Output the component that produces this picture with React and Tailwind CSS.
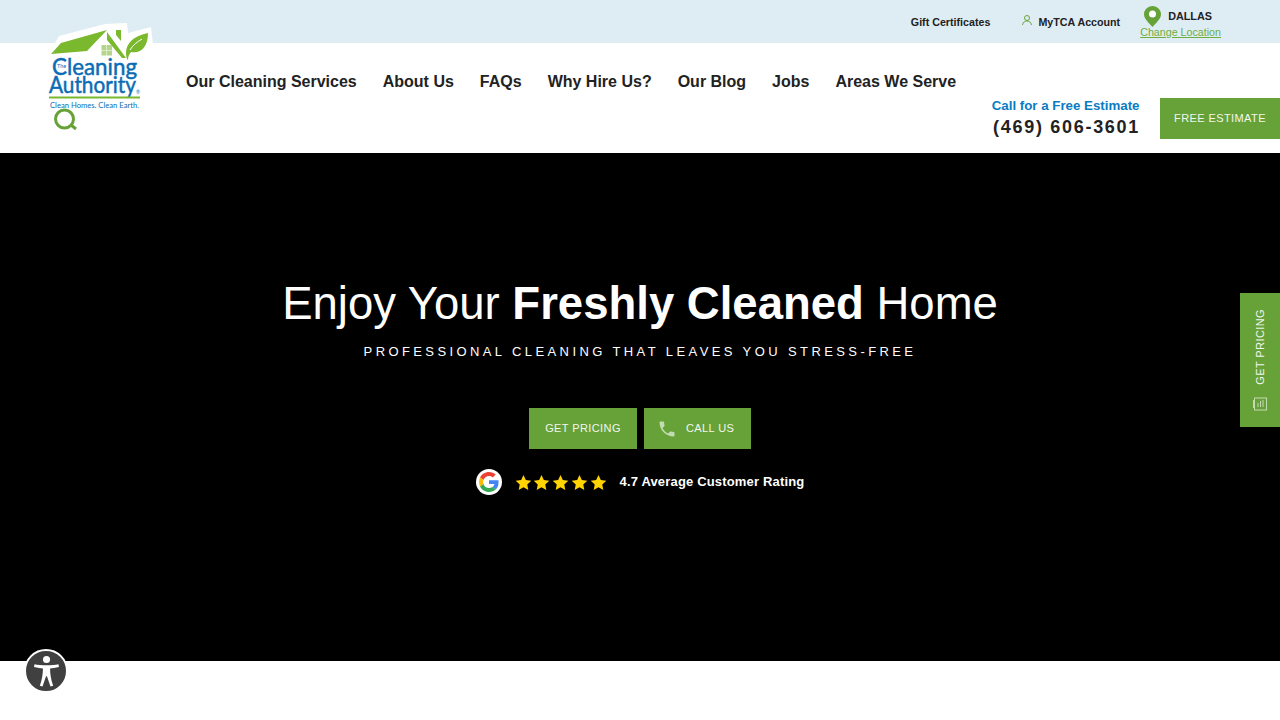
import React from 'react';

const sans = "font-['Liberation_Sans',Arial,sans-serif]";

const navLinks = ['Our Cleaning Services', 'About Us', 'FAQs', 'Why Hire Us?', 'Our Blog', 'Jobs', 'Areas We Serve'];

// Logo artwork, coordinates are page pixels offset from the svg corner
function Logo() {
  return (
    <svg width="125" height="120" viewBox="40 18 125 120" className="block">
      <path d="M59 36 L105 24 L127 23 L128 33 L151 27 L153 45 L143 62 L140 112 L46 112 L46 56 L49 53 Z" fill="#fff" />
      <path d="M61 43 L107 30 L87 51 L51 54 Z" fill="#7ab82e" />
      <path d="M107 32 L126 58 L122 58 L107 40 Z" fill="#7ab82e" />
      <path d="M116 30 L121 30 L121 41 L116 35 Z" fill="#7ab82e" />
      <path d="M127 59 C123 46 132 36 148 33 C148 47 141 54 131 52 C129 54 128 57 128 60 Z" fill="#7ab82e" />
      <path d="M130 50 C133 45 137 42 142 39" stroke="#fff" strokeWidth="1" fill="none" />
      <rect x="101.500" y="45" width="5" height="5" fill="#b5d58c" />
      <rect x="107" y="45" width="5" height="5" fill="#b5d58c" />
      <rect x="101.500" y="50.500" width="5" height="5" fill="#b5d58c" />
      <rect x="107" y="50.500" width="5" height="5" fill="#b5d58c" />
      <text x="52" y="75" fill="#0b6cb5" stroke="#0b6cb5" strokeWidth="0.5" fontFamily="Lato, sans-serif" fontSize="23" textLength="85" lengthAdjust="spacingAndGlyphs">Cleaning</text>
      <text x="57" y="68" fill="#0b6cb5" fontFamily="Lato, sans-serif" fontSize="5.500">The</text>
      <text x="49" y="92.500" fill="#0b6cb5" stroke="#0b6cb5" strokeWidth="0.5" fontFamily="Lato, sans-serif" fontSize="23" textLength="87" lengthAdjust="spacingAndGlyphs">Authority</text>
      <text x="136" y="94" fill="#0b6cb5" fontFamily="Lato, sans-serif" fontSize="5">®</text>
      <rect x="49" y="96.500" width="91" height="2" fill="#7ab82e" />
      <text x="50" y="108" fill="#0b6cb5" fontFamily="Lato, sans-serif" fontSize="7.500" textLength="89" lengthAdjust="spacingAndGlyphs">Clean Homes. Clean Earth.</text>
      <circle cx="64.500" cy="119" r="9" fill="none" stroke="#67a239" strokeWidth="3" />
      <path d="M71 125 L76 129" stroke="#67a239" strokeWidth="3" />
    </svg>
  );
}

function PhoneIcon() {
  return (
    <svg width="20" height="20" viewBox="0 0 24 24" fill="#c3dbb0">
      <path d="M6.620 10.790c1.440 2.830 3.760 5.140 6.590 6.590l2.200-2.200c.27-.27.67-.36 1.020-.24 1.120.37 2.330.57 3.570.57.55 0 1 .45 1 1V20c0 .55-.45 1-1 1-9.390 0-17-7.610-17-17 0-.55.45-1 1-1h3.500c.55 0 1 .45 1 1 0 1.250.2 2.450.57 3.570.11.35.03.74-.25 1.020l-2.200 2.200z" />
    </svg>
  );
}

function GoogleBadge() {
  return (
    <div className="w-[26px] h-[26px] rounded-full bg-white flex items-center justify-center">
      <svg width="20" height="20" viewBox="0 0 48 48">
        <path fill="#EA4335" d="M24 9.500c3.500 0 6.700 1.200 9.200 3.600l6.900-6.900C35.900 2.400 30.500 0 24 0 14.600 0 6.500 5.400 2.600 13.200l8 6.200C12.500 13.600 17.800 9.500 24 9.500z" />
        <path fill="#4285F4" d="M46.900 24.500c0-1.600-.1-3.100-.4-4.500H24v9h12.900c-.6 3-2.200 5.500-4.700 7.200l7.700 6c4.500-4.200 7-10.300 7-17.700z" />
        <path fill="#FBBC05" d="M10.600 28.600c-.5-1.400-.8-3-.8-4.600s.3-3.200.8-4.600l-8-6.200C.9 16.500 0 20.100 0 24s.9 7.500 2.600 10.800l8-6.200z" />
        <path fill="#34A853" d="M24 48c6.500 0 11.900-2.100 15.900-5.800l-7.700-6c-2.200 1.400-4.900 2.300-8.200 2.300-6.200 0-11.500-4.100-13.400-9.900l-8 6.200C6.500 42.600 14.600 48 24 48z" />
      </svg>
    </div>
  );
}

function Star() {
  return (
    <svg width="17" height="17" viewBox="0 0 24 24" fill="#ffd400">
      <path d="M12 1.500 L15.300 8.600 L23 9.500 L17.300 14.800 L18.800 22.500 L12 18.700 L5.200 22.500 L6.700 14.800 L1 9.500 L8.700 8.600 Z" />
    </svg>
  );
}

function App() {
  return (
    <div className={`${sans} relative min-h-[720px] bg-white text-[#222]`}>
      {/* top bar */}
      <div className="h-[43px] bg-[#deecf4] flex justify-end pr-[59px]">
        <div className="flex items-start">
          <a className="text-[10.700px] font-bold mt-[16px] mr-[31px] leading-[13px]">Gift Certificates</a>
          <div className="flex items-start mt-[14px] mr-[20px]">
            <svg width="12" height="12" viewBox="0 0 24 24" fill="none" stroke="#67a239" strokeWidth="2" className="mr-[5px]">
              <circle cx="12" cy="8" r="5" />
              <path d="M3 22c1-6 5-8 9-8s8 2 9 8" />
            </svg>
            <a className="text-[10.700px] font-bold mt-[2px] leading-[13px]">MyTCA Account</a>
          </div>
          <div className="flex flex-col pt-[6px]">
            <div className="flex items-center pl-[4px]">
              <svg width="17" height="21" viewBox="0 0 17 21">
                <path d="M8.500 0C3.800 0 0 3.700 0 8.300 0 13 5 17 8.500 21 12 17 17 13 17 8.300 17 3.700 13.200 0 8.500 0z" fill="#67a239" />
                <circle cx="8.500" cy="8" r="3.500" fill="#fff" />
              </svg>
              <span className="text-[10.800px] font-bold ml-[7px]">DALLAS</span>
            </div>
            <a className="text-[10.700px] leading-[13px] -mt-[1px] text-[#6fae3e] underline">Change Location</a>
          </div>
        </div>
      </div>

      {/* main header */}
      <div className="h-[110px] flex justify-between">
        <nav className="flex gap-[26px] pl-[186px] pt-[29px] h-fit">
          {navLinks.map((link) => (
            <a key={link} className="text-base font-bold leading-5 text-[#222] whitespace-nowrap">{link}</a>
          ))}
        </nav>
        <div className="flex items-end pb-[14px]">
          <div className="flex flex-col items-end mr-[20px] mb-[1px]">
            <span className="text-[13.300px] font-bold text-[#0a7cc4] leading-[18px] mr-[0.500px]">Call for a Free Estimate</span>
            <span className="text-lg font-bold tracking-[1.700px] leading-[22px] mt-[1px]">(469) 606-3601</span>
          </div>
          <a className="w-[120px] h-[41px] bg-[#67a239] text-[#f2f6ee] text-[11px] tracking-[0.400px] flex items-center justify-center">FREE ESTIMATE</a>
        </div>
      </div>

      {/* logo hangs over both bars */}
      <div className="absolute left-[40px] top-[18px]">
        <Logo />
      </div>

      {/* hero */}
      <section className="h-[508px] bg-black text-white flex flex-col items-center pt-[123px]">
        <h1 className="text-[45.500px] font-normal leading-[56px]">
          Enjoy Your <strong className="font-bold">Freshly Cleaned</strong> Home
        </h1>
        <p className="text-[13px] tracking-[3.400px] leading-[16px] mt-[12px]">PROFESSIONAL CLEANING THAT LEAVES YOU STRESS-FREE</p>
        <div className="flex gap-[7px] mt-[48px] text-[#f2f6ee]">
          <a className="w-[108px] h-[41px] bg-[#67a239] text-[11px] tracking-[0.400px] flex items-center justify-center">GET PRICING</a>
          <a className="w-[107px] h-[41px] bg-[#67a239] text-[11px] tracking-[0.400px] flex items-center pl-[13px]">
            <PhoneIcon />
            <span className="ml-[9px]">CALL US</span>
          </a>
        </div>
        <div className="flex items-center mt-[20px]">
          <GoogleBadge />
          <div className="flex gap-[1.800px] ml-[13px]">
            {[0, 1, 2, 3, 4].map((i) => <Star key={i} />)}
          </div>
          <span className="text-[13px] font-bold ml-[12.800px] tracking-[0.170px]">4.7 Average Customer Rating</span>
        </div>
      </section>

      {/* side tab */}
      <a className="absolute right-0 top-[293px] w-[40px] h-[134px] bg-[#67a239] text-[#f2f6ee] flex flex-col items-center pt-[16px]">
        <span className="text-[11px] tracking-[0.400px] [writing-mode:vertical-rl] rotate-180">GET PRICING</span>
        <svg width="14" height="14" viewBox="0 0 14 14" fill="none" stroke="#c3dbb0" strokeWidth="1" className="mt-[12px]">
          <rect x="1.500" y="1" width="12" height="12" />
          <path d="M0.500 3v8M5 10V6M7.500 10V4M10 10V3" />
        </svg>
      </a>

      {/* accessibility button */}
      <button className="absolute left-[24px] top-[649px] w-[44px] h-[44px] rounded-full bg-[#404040] border-2 border-white flex items-center justify-center">
        <svg width="29" height="32" viewBox="0 0 32 36" fill="#fff">
          <circle cx="16" cy="5" r="4" />
          <path d="M2.500 10.500 C9 12 23 12 29.500 10.500 L30 13.500 C26 14.500 22.500 15 20 15.300 C20 21 21 28 23.500 34.500 L20.500 35.500 L16.500 24 H15.500 L11.500 35.500 L8.500 34.500 C11 28 12 21 12 15.300 C9.500 15 6 14.500 2 13.500 Z" />
        </svg>
      </button>
    </div>
  );
}

export default App;
